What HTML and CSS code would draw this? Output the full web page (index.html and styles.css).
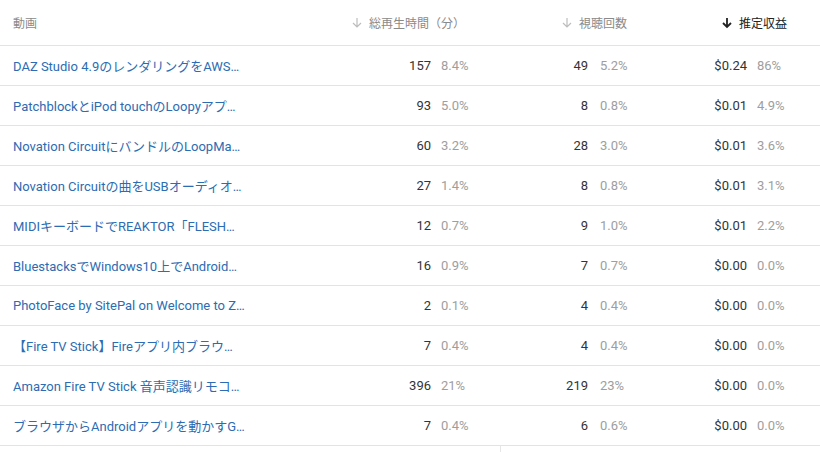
FILE: index.html
```html
<!DOCTYPE html>
<html lang="ja">
<head>
<meta charset="utf-8">
<link rel="stylesheet" href="styles.css">
</head>
<body>
<div class="table">
  <div class="row head">
    <div class="title-h">動画</div>
    <div class="h h1"><svg class="arr" viewBox="0 0 12 12"><path d="M6 1v9M2 6l4 4 4-4"/></svg>総再生時間（分）</div>
    <div class="h h2"><svg class="arr" viewBox="0 0 12 12"><path d="M6 1v9M2 6l4 4 4-4"/></svg>視聴回数</div>
    <div class="h h3 active"><svg class="arr" viewBox="0 0 12 12"><path d="M6 1v9M2 6l4 4 4-4"/></svg>推定収益</div>
  </div>
  <div class="row"><a class="title">DAZ Studio 4.9のレンダリングをAWS…</a><span class="num">157</span><span class="pct p1">8.4%</span><span class="num">49</span><span class="pct p2">5.2%</span><span class="num">$0.24</span><span class="pct p3">86%</span></div>
  <div class="row"><a class="title">PatchblockとiPod touchのLoopyアプ…</a><span class="num">93</span><span class="pct p1">5.0%</span><span class="num">8</span><span class="pct p2">0.8%</span><span class="num">$0.01</span><span class="pct p3">4.9%</span></div>
  <div class="row"><a class="title">Novation CircuitにバンドルのLoopMa…</a><span class="num">60</span><span class="pct p1">3.2%</span><span class="num">28</span><span class="pct p2">3.0%</span><span class="num">$0.01</span><span class="pct p3">3.6%</span></div>
  <div class="row"><a class="title">Novation Circuitの曲をUSBオーディオ…</a><span class="num">27</span><span class="pct p1">1.4%</span><span class="num">8</span><span class="pct p2">0.8%</span><span class="num">$0.01</span><span class="pct p3">3.1%</span></div>
  <div class="row"><a class="title">MIDIキーボードでREAKTOR「FLESH…</a><span class="num">12</span><span class="pct p1">0.7%</span><span class="num">9</span><span class="pct p2">1.0%</span><span class="num">$0.01</span><span class="pct p3">2.2%</span></div>
  <div class="row"><a class="title">BluestacksでWindows10上でAndroid…</a><span class="num">16</span><span class="pct p1">0.9%</span><span class="num">7</span><span class="pct p2">0.7%</span><span class="num">$0.00</span><span class="pct p3">0.0%</span></div>
  <div class="row"><a class="title">PhotoFace by SitePal on Welcome to Z…</a><span class="num">2</span><span class="pct p1">0.1%</span><span class="num">4</span><span class="pct p2">0.4%</span><span class="num">$0.00</span><span class="pct p3">0.0%</span></div>
  <div class="row"><a class="title">【Fire TV Stick】Fireアプリ内ブラウ…</a><span class="num">7</span><span class="pct p1">0.4%</span><span class="num">4</span><span class="pct p2">0.4%</span><span class="num">$0.00</span><span class="pct p3">0.0%</span></div>
  <div class="row"><a class="title">Amazon Fire TV Stick 音声認識リモコ…</a><span class="num">396</span><span class="pct p1">21%</span><span class="num">219</span><span class="pct p2">23%</span><span class="num">$0.00</span><span class="pct p3">0.0%</span></div>
  <div class="row"><a class="title">ブラウザからAndroidアプリを動かすG…</a><span class="num">7</span><span class="pct p1">0.4%</span><span class="num">6</span><span class="pct p2">0.6%</span><span class="num">$0.00</span><span class="pct p3">0.0%</span></div>
</div>
<div class="foot"><div class="stem"></div></div>
</body>
</html>
```
FILE: styles.css
```css
html, body {
  margin: 0;
  background: #fff;
}
body {
  font-family: Roboto, "Noto Sans CJK JP", sans-serif;
  font-size: 13px;
  color: #333;
}
.table {
  width: 820px;
}
.row {
  display: grid;
  grid-template-columns: 340px 91px 49px 108px 48px 111px 56px 17px;
  align-items: center;
  height: 39px;
  border-bottom: 1px solid #e3e3e3;
}
.row.head {
  height: 45px;
  grid-template-columns: 340px 140px 156px 167px 17px;
  font-size: 12px;
  color: #8a8a8a;
}
.title-h {
  padding-left: 13px;
}
.h {
  display: flex;
  align-items: center;
  justify-content: flex-end;
}
.h1 { padding-right: 15px; }
.h2 { padding-right: 9px; }
.h3 { padding-right: 16px; }
.h.active { color: #222; }
.arr {
  width: 12px;
  height: 12px;
  margin-right: 6px;
  fill: none;
  stroke: #bdbdbd;
  stroke-width: 1.2;
}
.active .arr {
  stroke: #222;
  stroke-width: 1.8;
}
.title {
  padding-left: 13px;
  color: #2c6cb2;
  white-space: nowrap;
  overflow: hidden;
}
.num {
  text-align: right;
  color: #333;
}
.pct {
  color: #9e9e9e;
}
.p1 { padding-left: 10px; }
.p2 { padding-left: 12px; }
.p3 { padding-left: 10px; }
.foot {
  height: 7px;
}
.stem {
  margin-left: 500px;
  width: 1px;
  height: 7px;
  background: #e6e6e6;
}
```
